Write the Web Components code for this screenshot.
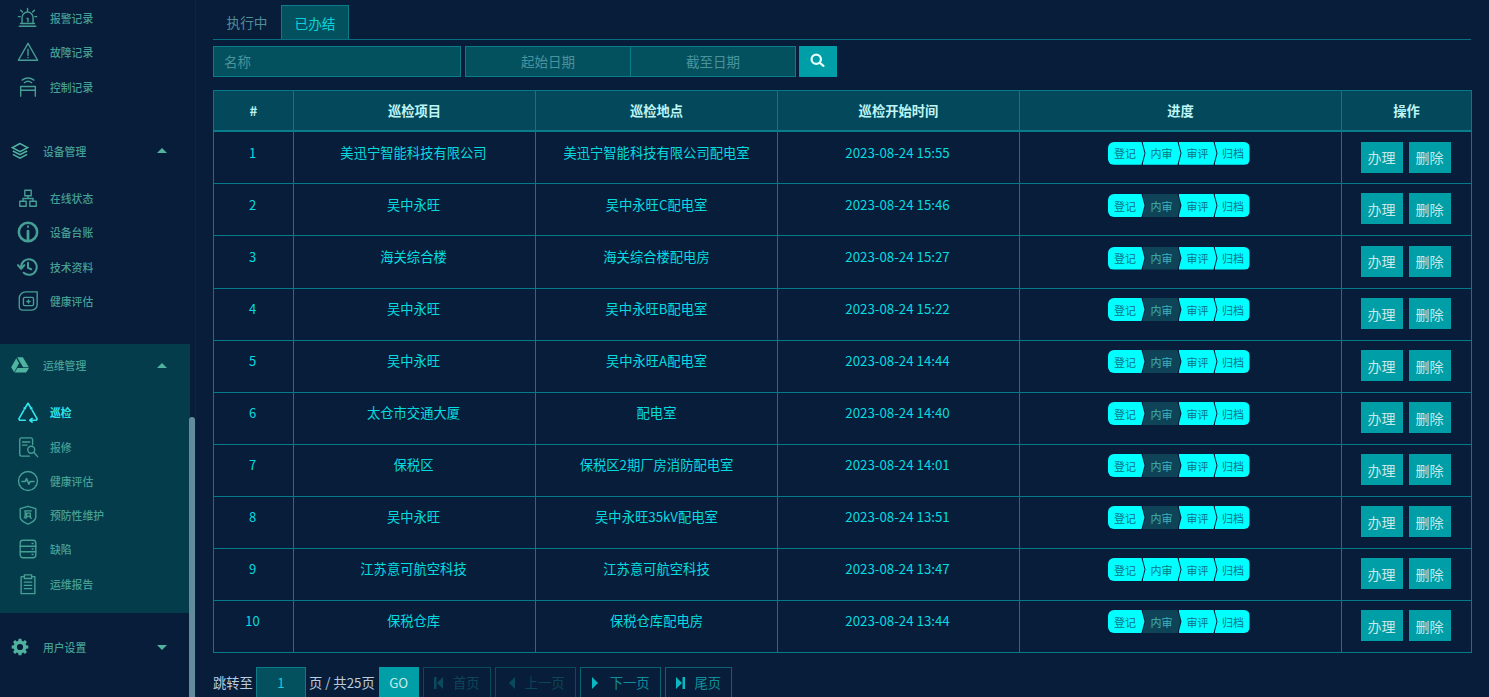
<!DOCTYPE html>
<html lang="zh"><head><meta charset="utf-8"><title>巡检</title>
<style>html,body{margin:0;height:100%;overflow:hidden;background:#081d39}body{font-family:"Noto Sans CJK SC","Noto Sans",sans-serif}</style>
</head><body><app-shell></app-shell>
<script>
const I={
alarm:'<path d="M5.500 18v-6.500a6 6 0 0 1 12 0V18M2.500 21h18M4 18h15M11 12.500h1v3.500M11.500 1.500V4M4 3.500l2 2M19 3.500l-2 2M1.500 10.500h2M19.500 10.500h2"/>',
warn:'<path d="M12 2.500 1.500 21h21z"/><path d="M12 9v6.500M12 17.800v.400"/>',
ctrl:'<path d="M4 22V11.500h16V22M4 15.500h16M8 7.300a6.500 6.500 0 0 1 8 0M5.500 4.500a11 11 0 0 1 13 0"/>',
net:'<path d="M8.500 3.500h7v6h-7zM3 15.500h7v5.500H3zM14 15.500h7v5.500h-7zM12 9.500v3M6.500 15.500v-3h11v3"/>',
gauge:'<circle cx="12" cy="12" r="10" stroke-width="2.800"/><path d="M12 11v10" stroke-width="3"/><path d="M12 5.500v1" stroke-width="2"/>',
hist:'<path d="M4.500 12a8.500 8.500 0 1 1 2.800 6.300M1 10l3.500 4 3.500-4M12 7.500V13l3.500 1.500" stroke-width="2.200"/>',
health:'<path d="M22 2v14a6 6 0 0 1-6 6H6a3.500 3.500 0 0 1-3.500-3.500V9A7 7 0 0 1 9.500 2z"/><rect x="7" y="8" width="11" height="9" rx="1.500"/><path d="M12.500 10.800v3.500M10.700 12.500h3.500"/>',
cycle:'<path d="M9.500 6.500 12 2.500l2.500 4M7.500 10 2 19.500l1 1.500h6M16.500 10 22 19.500 21 21h-7M14 21l2.500-2M14 21l2.500 2" stroke-width="1.800"/><circle cx="8.500" cy="8" r=".800" fill="currentColor"/><circle cx="15.500" cy="8" r=".800" fill="currentColor"/>',
rep:'<path d="M17 9.500V4a2 2 0 0 0-2-2H5a2 2 0 0 0-2 2v16a2 2 0 0 0 2 2h8.500M6 6.500h8M6 10h5"/><circle cx="15.500" cy="15" r="3.800"/><path d="m18.500 18 4 4.500"/>',
pulse:'<circle cx="12" cy="12" r="10.300"/><path d="M5.500 12.500h3.500l1.500-3 2.500 6 1.500-3H18.500" stroke-width="1.800"/>',
shield:'<path d="M12 2.500 3.500 5v9.500c0 3.500 4.500 5.800 8.500 7.500 4-1.700 8.500-4 8.500-7.500V5z"/><path d="M8.500 7.500h7M9 7.500v4.500c0 1-.500 2-1 3M10.500 10h4v3.500h-4zM11 14l-1.500 1.500M14 14l1.500 1.500"/>',
srv:'<rect x="3.500" y="2.500" width="17" height="19" rx="3"/><path d="M3.500 9h17M3.500 15h17M16.500 6h1M16.500 12h1M16.500 18h1"/>',
clip:'<path d="M8 4H4.500v18.500h15V4H16M8 2h8v4H8zM8 10h8M8 13.500h8M8 17h8"/>'};
const G={
layers:'<path d="M12 2 2 7.500 12 13l10-5.500z" fill="none" stroke="currentColor" stroke-width="2"/><path d="m2.500 12 9.500 5 9.500-5M2.500 16.500l9.500 5 9.500-5" fill="none" stroke="currentColor" stroke-width="2"/>',
drive:'<path d="M8.200 1.500h7.600l8 13.500h-7.600z"/><path d="M7 3 10.800 9.500 4.200 21.500.2 15z"/><path d="M8.500 16h15.500l-3.800 6H5z"/>',
gear:'<path fill-rule="evenodd" d="M10 1h4l.6 3.100 1.900.8L19.100 3l2.900 2.900-1.900 2.600.8 1.900L24 11v4l-3.100.5-.8 1.900 1.900 2.700-2.900 2.900-2.600-1.900-1.900.8L14 25h-4l-.6-3.100-1.900-.8L4.900 23 2 20.100l1.900-2.700-.8-1.900L0 15v-4l3.100-.6.800-1.900L2 5.900 4.900 3l2.600 1.900 1.900-.8zM12 8.500a4.500 4.500 0 1 0 0 9 4.500 4.500 0 0 0 0-9z"/>'};

class NavItem extends HTMLElement{
 connectedCallback(){const a=this.hasAttribute('active');
  this.attachShadow({mode:'open'}).innerHTML=`<style>
  :host{display:flex;align-items:center;height:34.3px;padding-left:17px;gap:11px;font-size:10.800px;color:${a?'#2ee6ee':'#459f95'};font-weight:${a?700:500};white-space:nowrap}
  svg{width:22px;height:22px;flex:none;fill:none;stroke:currentColor;stroke-width:1.500;stroke-linecap:round;stroke-linejoin:round}
  </style><svg viewBox="0 0 24 24">${I[this.getAttribute('icon')]}</svg><slot></slot>`;}
}
class NavHead extends HTMLElement{
 connectedCallback(){const up=this.getAttribute('dir')!=='down';
  this.attachShadow({mode:'open'}).innerHTML=`<style>
  :host{display:flex;align-items:center;height:44px;padding-left:11px;gap:14px;font-size:10.800px;font-weight:500;color:#459f95;white-space:nowrap}
  svg{width:18px;height:18px;flex:none;fill:#4fb3a0;color:#4fb3a0}
  slot{display:block}
  i{margin-left:auto;margin-right:23px;width:0;height:0;border:5px solid transparent;${up?'border-top:0;border-bottom:5px solid #4fb3a0':'border-bottom:0;border-top:5px solid #4fb3a0'}}
  </style><svg viewBox="0 0 24 ${this.getAttribute('icon')==='gear'?26:24}">${G[this.getAttribute('icon')]}</svg><slot></slot><i></i>`;}
}
class SideNav extends HTMLElement{
 connectedCallback(){this.attachShadow({mode:'open'}).innerHTML=`<style>
  :host{display:flex;flex-direction:column;width:196px;flex:none;height:697px;overflow:hidden;position:relative;box-sizing:border-box;border-right:1px solid #0b2440;padding-top:1px}
  .sec{width:190px}
  .dev{padding-top:25px}
  .dev nav-head{margin-bottom:8px}
  .ops{background:#053c4b;margin-top:26px;height:269px}
  .ops nav-head{height:42px;margin-bottom:9px}
  .usr{margin-top:12px}
  .bar{position:absolute;left:189px;top:417px;width:6px;height:290px;border-radius:3px;background:#628c9c}
  </style>
  <div class="sec">
   <nav-item icon="alarm">报警记录</nav-item><nav-item icon="warn">故障记录</nav-item><nav-item icon="ctrl">控制记录</nav-item>
  </div>
  <div class="sec dev"><nav-head icon="layers">设备管理</nav-head>
   <nav-item icon="net">在线状态</nav-item><nav-item icon="gauge">设备台账</nav-item><nav-item icon="hist">技术资料</nav-item><nav-item icon="health">健康评估</nav-item>
  </div>
  <div class="sec ops"><nav-head icon="drive">运维管理</nav-head>
   <nav-item icon="cycle" active>巡检</nav-item><nav-item icon="rep">报修</nav-item><nav-item icon="pulse">健康评估</nav-item><nav-item icon="shield">预防性维护</nav-item><nav-item icon="srv">缺陷</nav-item><nav-item icon="clip">运维报告</nav-item>
  </div>
  <div class="sec usr"><nav-head icon="gear" dir="down">用户设置</nav-head></div>
  <div class="bar"></div>`;}
}
class TabBar extends HTMLElement{
 connectedCallback(){this.attachShadow({mode:'open'}).innerHTML=`<style>
  :host{display:flex;align-items:flex-end;height:34px;margin-top:5px;border-bottom:1px solid #067080;font-size:13.700px;color:#4f8d97}
  div{box-sizing:border-box;height:34px;display:flex;align-items:center;justify-content:center}
  .a{width:68px;background:#03505f;border:1px solid #0a7c8a;border-bottom:0;color:#0ad4da}
  .b{width:68px}
  </style><div class="b">执行中</div><div class="a">已办结</div>`;}
}
class FilterBar extends HTMLElement{
 connectedCallback(){this.attachShadow({mode:'open'}).innerHTML=`<style>
  :host{display:flex;height:31px;margin-top:6px;font-size:13.500px;color:#4b939c}
  div{box-sizing:border-box;background:#03505f;border:1px solid #0a7c8a;display:flex;align-items:center;height:31px;padding-bottom:2px}
  .n{width:248px;padding-left:10px;margin-right:4px}
  .d{width:166px;justify-content:center}
  .d+.d{border-left:0;width:165px;margin-right:3px}
  .s{width:38px;background:#009ea6;border:0;justify-content:center;padding-bottom:3px;padding-right:2px}
  svg{width:15px;height:15px;fill:none;stroke:#e6ffff;stroke-width:3.600;stroke-linecap:round}
  </style><div class="n">名称</div><div class="d">起始日期</div><div class="d">截至日期</div>
  <div class="s"><svg viewBox="0 0 24 24"><circle cx="10" cy="10" r="7.500"/><path d="m16 16 5.500 4.500"/></svg></div>`;}
}
class ProgressSteps extends HTMLElement{
 connectedCallback(){const dim=this.hasAttribute('dim');
  this.attachShadow({mode:'open'}).innerHTML=`<style>
  :host{display:flex;justify-content:center;font-size:11px;color:#0b7585;height:23px;margin-bottom:8px}
  span{display:flex;align-items:center;justify-content:center;height:23px;width:38px;margin-left:-2px;box-sizing:border-box;background:#0ff;clip-path:polygon(0 0,calc(100% - 3px) 0,100% 50%,calc(100% - 3px) 100%,0 100%,3px 50%)}
  span:first-of-type{margin-left:0;width:37px;padding-right:2px;clip-path:polygon(0 0,calc(100% - 3px) 0,100% 50%,calc(100% - 3px) 100%,0 100%);border-radius:6px 0 0 6px}
  span:last-of-type{clip-path:polygon(0 0,100% 0,100% 100%,0 100%,3px 50%);border-radius:0 6px 6px 0;width:35px;padding-left:2px}
  .d{background:#0f4458;color:#3fb0b8}
  </style><span>登记</span><span class="${dim?'d':''}">内审</span><span>审评</span><span>归档</span>`;}
}
const ROWS=[['美迅宁智能科技有限公司','美迅宁智能科技有限公司配电室','15:55',0],['吴中永旺','吴中永旺C配电室','15:46',1],['海关综合楼','海关综合楼配电房','15:27',1],['吴中永旺','吴中永旺B配电室','15:22',1],['吴中永旺','吴中永旺A配电室','14:44',1],['太仓市交通大厦','配电室','14:40',1],['保税区','保税区2期厂房消防配电室','14:01',1],['吴中永旺','吴中永旺35kV配电室','13:51',1],['江苏意可航空科技','江苏意可航空科技','13:47',0],['保税仓库','保税仓库配电房','13:44',1]];
class DataTable extends HTMLElement{
 connectedCallback(){
  const body=ROWS.map((r,i)=>`<tr><td><p class="n">${i+1}</p></td><td><p>${r[0]}</p></td><td class="m"><p>${r[1]}</p></td><td><p>2023-08-24 ${r[2]}</p></td><td class="s"><progress-steps ${r[3]?'dim':''}></progress-steps></td><td class="op"><b>办理</b><b>删除</b></td></tr>`).join('');
  this.attachShadow({mode:'open'}).innerHTML=`<style>
  :host{display:block;margin-top:13px}
  table{border-collapse:collapse;table-layout:fixed;width:1258px;font-size:13.300px;color:#05dce0}
  th,td{border:1px solid #057a88;text-align:center;padding:0 2px 0 0;vertical-align:middle}
  td.m,th{padding-right:0}
  td.s{padding-right:4px}
  thead tr{height:40px}
  tbody tr{height:52px}
  tbody tr:nth-child(1),tbody tr:nth-child(3){height:53px}
  tbody tr:nth-child(n+4) td.s{padding-bottom:2px}
  tbody tr:nth-child(n+2) td.op{padding-bottom:2px}
  tbody tr:nth-child(n+3) p{margin-bottom:12px}
  th{background:#03485b;color:#bdf4f5;font-weight:700;border-bottom:2px solid #0a7c8a}
  p{margin:0 0 10px}
  p.n{font-size:13px}
  b{display:inline-flex;align-items:center;justify-content:center;width:42px;height:31px;background:#009ea6;color:#c9e8e8;font-weight:400;font-size:14px;margin:0 3px}
  </style><table><colgroup><col style="width:80px"><col style="width:242px"><col style="width:242px"><col style="width:242px"><col style="width:322px"><col style="width:130px"></colgroup>
  <thead><tr><th>#</th><th>巡检项目</th><th>巡检地点</th><th>巡检开始时间</th><th>进度</th><th>操作</th></tr></thead><tbody>${body}</tbody></table>`;}
}
class PagerBar extends HTMLElement{
 connectedCallback(){
  const tri=(l,bar,c)=>`<svg viewBox="0 0 10 12" fill="${c}"><path d="${l?'M9 0v12L3 6z':'M1 0v12l6-6z'}"/>${bar?`<path d="${l?'M0 0h2.500v12H0z':'M7.500 0H10v12H7.500z'}"/>`:''}</svg>`;
  this.attachShadow({mode:'open'}).innerHTML=`<style>
  :host{display:flex;align-items:center;height:31px;margin-top:14px;font-size:13.300px;color:#bcd;white-space:nowrap}
  .i{box-sizing:border-box;width:50px;height:31px;margin:0 3px;background:#03505f;border:1px solid #0a7c8a;color:#12cfd6;display:flex;align-items:center;justify-content:center}
  .g{width:40px;height:31px;margin:0 4px;background:#009ea6;color:#c9e8e8;display:flex;align-items:center;justify-content:center}
  .b{box-sizing:border-box;height:31px;margin-right:4px;border:1px solid #0a6272;display:flex;align-items:center;justify-content:center;gap:9px;color:#0e8f9c}
  .b svg{width:10px;height:12px}
  .off{color:#0b4658;border-color:#0a4a5c}
  </style><span>跳转至</span><div class="i">1</div><span>页 / 共25页</span><div class="g">GO</div>
  <div class="b off" style="width:68px">${tri(1,1,'#0b4a5c')}首页</div>
  <div class="b off" style="width:81px">${tri(1,0,'#0b4a5c')}上一页</div>
  <div class="b" style="width:81px">${tri(0,0,'#0ab8c2')}下一页</div>
  <div class="b" style="width:67px">${tri(0,1,'#0ab8c2')}尾页</div>`;}
}
class AppShell extends HTMLElement{
 connectedCallback(){this.attachShadow({mode:'open'}).innerHTML=`<style>
  :host{display:flex;width:1489px;height:697px;overflow:hidden;background:#081d39}
  main{width:1258px;margin-left:17px;flex:none}
  </style><side-nav></side-nav><main><tab-bar></tab-bar><filter-bar></filter-bar><data-table></data-table><pager-bar></pager-bar></main>`;}
}
[['nav-item',NavItem],['nav-head',NavHead],['side-nav',SideNav],['tab-bar',TabBar],['filter-bar',FilterBar],['progress-steps',ProgressSteps],['data-table',DataTable],['pager-bar',PagerBar],['app-shell',AppShell]].forEach(([n,c])=>customElements.define(n,c));
</script></body></html>
